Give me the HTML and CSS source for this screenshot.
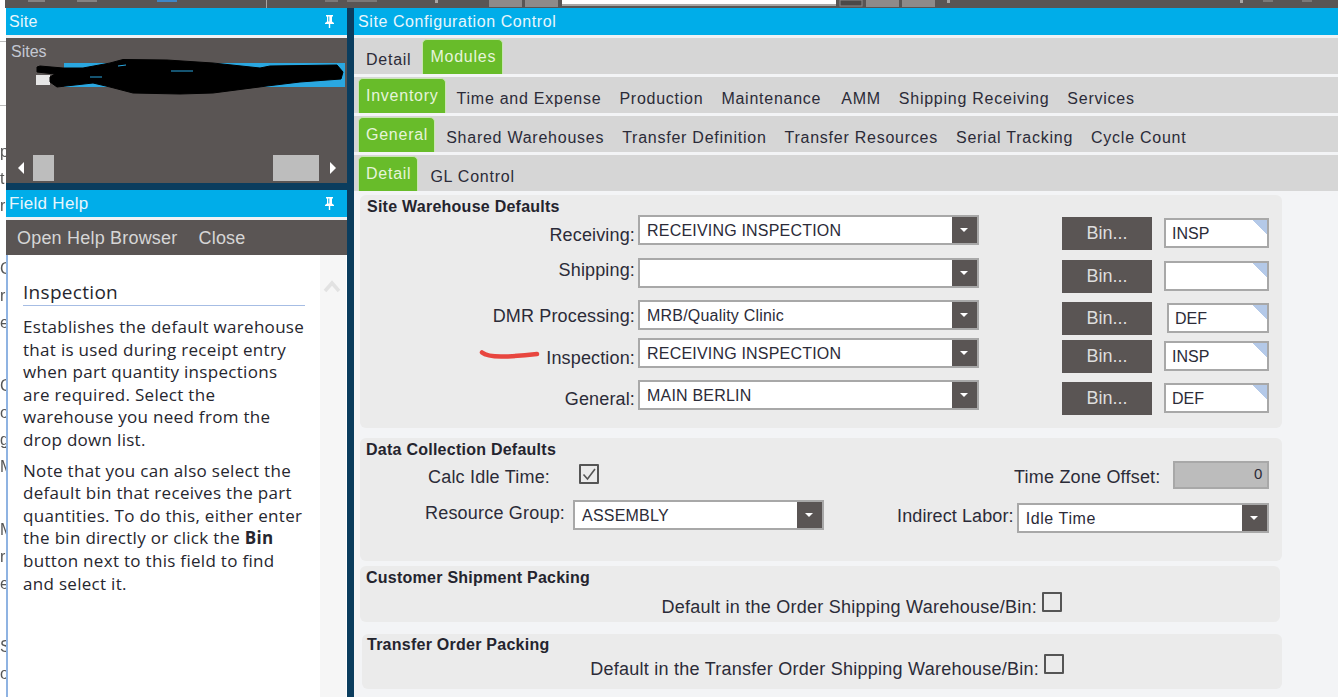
FILE: index.html
```html
<!DOCTYPE html>
<html>
<head>
  <meta charset="UTF-8">
  <title>Site Configuration Control</title>
  <link rel="stylesheet" href="styles.css">
</head>
<body>
  <div class="app">
    <!-- Toolbar is cut off by the top of the window, only its lower edge shows -->
    <svg class="toolbar" width="1333" height="8" viewBox="0 0 1333 8">
      <rect x="23" y="0" width="17" height="2" fill="#858281"/>
      <rect x="72" y="0" width="20" height="2" fill="#858281"/>
      <rect x="152" y="0" width="20" height="2" fill="#3f86c4"/>
      <rect x="261" y="0" width="1" height="8" fill="#a8a6a5"/>
      <rect x="320" y="0" width="13" height="2" fill="#7b7877"/>
      <rect x="342" y="0" width="30" height="2" fill="#7b7877"/>
      <rect x="430" y="0" width="3" height="3" fill="#a8a6a5"/>
      <rect x="484" y="0" width="33" height="7" fill="#8e8a89"/>
      <rect x="520" y="0" width="33" height="7" fill="#8e8a89"/>
      <rect x="557" y="0" width="274" height="4" fill="#ffffff"/>
      <rect x="557" y="4" width="274" height="2" fill="#a8a6a5"/>
      <rect x="835" y="0" width="22" height="6" fill="#4c4847" stroke="#8e8a89"/>
      <rect x="861" y="0" width="33" height="7" fill="#8e8a89"/>
      <rect x="897" y="0" width="33" height="7" fill="#8e8a89"/>
      <rect x="942" y="0" width="3" height="3" fill="#a8a6a5"/>
      <rect x="1235" y="0" width="3" height="3" fill="#a8a6a5"/>
      <rect x="1258" y="0" width="10" height="2" fill="#7b7877"/>
      <rect x="1297" y="0" width="10" height="2" fill="#7b7877"/>
    </svg>

    <div class="main">
      <!-- Sliver of the window behind -->
      <div class="behind">
        <div class="behind-rule"></div>
        <div class="behind-rule"></div>
        <div class="behind-letters">
          <div>p</div><div>t</div><div>r</div>
        </div>
        <div class="behind-letters">
          <div>C</div><div>r</div><div>e</div>
        </div>
        <div class="behind-letters">
          <div>C</div><div>o</div><div>g</div><div>M</div>
        </div>
        <div class="behind-letters">
          <div>M</div><div>r</div><div>e</div>
        </div>
        <div class="behind-letters">
          <div>S</div><div>o</div>
        </div>
      </div>

      <div class="left">
        <div class="panel-title">
          <span>Site</span>
          <svg class="pin" width="11" height="13" viewBox="0 0 11 13"><path d="M2 0h7v1.500H8v5l2 1.500v1H6.200v4H4.800V9H1V8l2-1.500v-5H2z M4.300 1.500v5h1v-5z" fill="#fff" fill-rule="evenodd"/></svg>
        </div>
        <div class="title-rule"></div>
        <div class="site-tree">
          <div class="tree-label">Sites</div>
          <div class="tree-row">
            <div class="tree-box"></div>
            <div class="tree-selected"></div>
          </div>
          <!-- Site name was scribbled out in the original capture -->
          <svg class="scribble" width="340" height="40" viewBox="0 0 340 40">
            <path d="M31 8L34 7L57 9L77 9L104 4L117 .5L161 1L207 4L254 9L264 7L331 6L337 13L335 20L294 23L261 27L207 34L174 35L127 34L104 28L87 24L51 28L44 23L44 18L49 15L31 13Z" fill="#000" stroke="#000" stroke-linejoin="round"/>
            <path d="M112 7l8-1M165 12h22M84 18h12" stroke="#2aa7e0" stroke-width="1"/>
          </svg>
          <div class="tree-scroll">
            <span class="arrow-left"></span>
            <span class="scroll-thumb scroll-thumb-small"></span>
            <span class="scroll-thumb scroll-thumb-large"></span>
            <span class="arrow-right"></span>
          </div>
        </div>

        <div class="panel-sep"></div>

        <div class="panel-title panel-title-help">
          <span>Field Help</span>
          <svg class="pin" width="11" height="13" viewBox="0 0 11 13"><path d="M2 0h7v1.500H8v5l2 1.500v1H6.200v4H4.800V9H1V8l2-1.500v-5H2z M4.300 1.500v5h1v-5z" fill="#fff" fill-rule="evenodd"/></svg>
        </div>
        <div class="title-rule"></div>
        <div class="help-actions">
          <span>Open Help Browser</span>
          <span>Close</span>
        </div>
        <div class="help-body">
          <div class="help-text">
            <h2>Inspection</h2>
            <p>Establishes the default warehouse that is used during receipt entry when part quantity inspections are required. Select the warehouse you need from the drop down list.</p>
            <p>Note that you can also select the default bin that receives the part quantities. To do this, either enter the bin directly or click the <b>Bin</b> button next to this field to find and select it.</p>
          </div>
          <div class="help-scroll">
            <svg width="18" height="13" viewBox="0 0 18 13"><path d="M2 11L9 3L16 11" fill="none" stroke="#e2e2e2" stroke-width="3.500"/></svg>
          </div>
        </div>
      </div>

      <div class="right">
        <div class="panel-title panel-title-config">Site Configuration Control</div>
        <div class="title-rule"></div>

        <div class="tab-row tab-row-top">
          <span class="tab">Detail</span>
          <span class="tab tab-active">Modules</span>
        </div>
        <div class="tab-row">
          <span class="tab tab-active">Inventory</span>
          <span class="tab">Time and Expense</span>
          <span class="tab">Production</span>
          <span class="tab">Maintenance</span>
          <span class="tab tab-amm">AMM</span>
          <span class="tab">Shipping Receiving</span>
          <span class="tab">Services</span>
        </div>
        <div class="tab-row">
          <span class="tab tab-active">General</span>
          <span class="tab">Shared Warehouses</span>
          <span class="tab">Transfer Definition</span>
          <span class="tab">Transfer Resources</span>
          <span class="tab">Serial Tracking</span>
          <span class="tab">Cycle Count</span>
        </div>
        <div class="tab-row tab-row-last">
          <span class="tab tab-active">Detail</span>
          <span class="tab">GL Control</span>
        </div>

        <div class="content">
          <section class="group group-warehouse">
            <h3>Site Warehouse Defaults</h3>
            <div class="wh-rows">
              <div class="wh-row">
                <label>Receiving:</label>
                <div class="combo combo-wh"><span>RECEIVING INSPECTION</span><i></i></div>
                <button>Bin...</button>
                <div class="bin-input">INSP</div>
              </div>
              <div class="wh-row">
                <label>Shipping:</label>
                <div class="combo combo-wh"><span></span><i></i></div>
                <button>Bin...</button>
                <div class="bin-input"></div>
              </div>
              <div class="wh-row">
                <label>DMR Processing:</label>
                <div class="combo combo-wh"><span>MRB/Quality Clinic</span><i></i></div>
                <button>Bin...</button>
                <div class="bin-input bin-input-narrow">DEF</div>
              </div>
              <div class="wh-row">
                <label class="marked">
                  <svg class="red-mark" width="62" height="10" viewBox="0 0 62 10"><path d="M3 2.500Q8 6.500 22 6.500T58 4" fill="none" stroke="#e8463f" stroke-width="4.500" stroke-linecap="round"/></svg>
                  Inspection:
                </label>
                <div class="combo combo-wh"><span>RECEIVING INSPECTION</span><i></i></div>
                <button>Bin...</button>
                <div class="bin-input">INSP</div>
              </div>
              <div class="wh-row">
                <label>General:</label>
                <div class="combo combo-wh"><span>MAIN BERLIN</span><i></i></div>
                <button>Bin...</button>
                <div class="bin-input">DEF</div>
              </div>
            </div>
          </section>

          <section class="group group-data">
            <h3>Data Collection Defaults</h3>
            <div class="data-row data-row-first">
              <label class="calc-label">Calc Idle Time:</label>
              <div class="check check-on">
                <svg width="19" height="19" viewBox="0 0 19 19"><path d="M3.500 9.500L7.500 14L15 4" fill="none" stroke="#555" stroke-width="1.600"/></svg>
              </div>
              <label class="zone-label">Time Zone Offset:</label>
              <div class="zone-input">0</div>
            </div>
            <div class="data-row data-row-second">
              <label class="resource-label">Resource Group:</label>
              <div class="combo combo-resource"><span>ASSEMBLY</span><i></i></div>
              <label class="labor-label">Indirect Labor:</label>
              <div class="combo combo-labor"><span>Idle Time</span><i></i></div>
            </div>
          </section>

          <section class="group group-shipment">
            <h3>Customer Shipment Packing</h3>
            <div class="check-row">
              <label>Default in the Order Shipping Warehouse/Bin:</label>
              <div class="check"></div>
            </div>
          </section>

          <section class="group group-transfer">
            <h3>Transfer Order Packing</h3>
            <div class="check-row">
              <label>Default in the Transfer Order Shipping Warehouse/Bin:</label>
              <div class="check"></div>
            </div>
          </section>
        </div>
      </div>
    </div>
  </div>
</body>
</html>
```

FILE: styles.css
```css
* {
  box-sizing: border-box;
}

html, body {
  margin: 0;
  height: 100%;
  overflow: hidden;
}

body {
  font-family: "Liberation Sans", Arial, sans-serif;
  color: #2b2b38;
  background-color: #fff;
}

.app {
  width: 1338px;
  height: 697px;
  overflow: hidden;
  filter: blur(0.4px);
}

.toolbar {
  display: block;
  margin-left: 5px;
  background-color: #595554;
}

.main {
  display: flex;
  height: 689px;
  background: linear-gradient(to right, #fff 6px, #0b3d5e 6px);
}

/* Window behind */
.behind {
  width: 6px;
  flex: none;
  overflow: hidden;
  background-color: #fff;
  color: #555;
  font-size: 16px;
  line-height: 27px;
  display: flex;
  flex-direction: column;
}

.behind-rule {
  height: 34px;
  border-bottom: 1px solid #bbb;
  flex: none;
}

.behind-rule + .behind-rule {
  height: 64px;
}

.behind-rule + .behind-rule + .behind-letters {
  margin-top: 32px;
}

.behind-letters {
  margin-bottom: 36px;
  flex: none;
}

/* Left column */
.left {
  width: 341px;
  flex: none;
  display: flex;
  flex-direction: column;
}

.panel-title {
  height: 27px;
  background-color: #00ade9;
  color: #e8f6fc;
  font-size: 16px;
  line-height: 27px;
  letter-spacing: 0.3px;
  padding: 0 12px 0 3px;
  display: flex;
  justify-content: space-between;
  align-items: center;
  flex: none;
}

.panel-title-help {
  font-size: 17px;
}

.panel-title-config {
  padding-left: 4px;
  letter-spacing: 0.58px;
}

.pin {
  display: block;
}

.title-rule {
  height: 3px;
  flex: none;
  background-color: #f0f2f4;
}

.site-tree {
  height: 145px;
  flex: none;
  position: relative;
  background-color: #5a5554;
  padding: 5px 5px 0;
}

.tree-label {
  color: #c4c8d2;
  font-size: 16px;
  line-height: 18px;
}

.tree-row {
  display: flex;
  align-items: flex-end;
  height: 24px;
  margin-top: 2px;
  padding-left: 25px;
}

.tree-box {
  width: 14px;
  height: 10px;
  flex: none;
  margin-bottom: 2px;
  background-color: #e6e6e6;
}

.tree-selected {
  width: 281px;
  height: 24px;
  flex: none;
  margin-left: 14px;
  background-color: #2aa7e0;
}

.scribble {
  position: absolute;
  left: 0;
  top: 21px;
}

.tree-scroll {
  position: absolute;
  left: 0;
  right: 0;
  bottom: 2px;
  height: 26px;
  display: flex;
  align-items: center;
}

.arrow-left,
.arrow-right {
  width: 0;
  height: 0;
  border-top: 6px solid transparent;
  border-bottom: 6px solid transparent;
}

.arrow-left {
  margin-left: 12px;
  border-right: 6px solid #fff;
}

.arrow-right {
  margin-left: 11px;
  border-left: 6px solid #fff;
}

.scroll-thumb {
  height: 26px;
  background-color: #bdbdbd;
}

.scroll-thumb-small {
  width: 21px;
  margin-left: 9px;
}

.scroll-thumb-large {
  width: 46px;
  margin-left: 219px;
}

.panel-sep {
  height: 7px;
  flex: none;
  background-color: #0b3d5e;
}

.help-actions {
  height: 35px;
  flex: none;
  background-color: #5a5554;
  color: #d6d6d6;
  font-size: 18px;
  line-height: 36px;
  letter-spacing: 0.2px;
  padding-left: 11px;
  display: flex;
  gap: 21px;
}

.help-body {
  flex: 1;
  display: flex;
  background-color: #fff;
  border-left: 2px solid #8fb3e2;
}

.help-text {
  width: 312px;
  padding: 24px 0 0 15px;
  font-family: "Open Sans", sans-serif;
  font-size: 17px;
  line-height: 22.6px;
  letter-spacing: 0.3px;
  color: #26262e;
}

.help-text h2 {
  margin: 0 0 10px;
  width: 282px;
  font-size: 19px;
  font-weight: 400;
  line-height: 26px;
  border-bottom: 1px solid #a6bde4;
}

.help-text p {
  width: 284px;
  margin: 0 0 8px;
}

.help-scroll {
  flex: 1;
  margin-right: 1px;
  padding: 24px 0 0 3px;
  background-color: #f6f6f6;
}

/* Right column */
.right {
  flex: 1;
  margin-left: 7px;
  background-color: #f3f4f6;
  display: flex;
  flex-direction: column;
}

.tab-row {
  height: 36px;
  flex: none;
  display: flex;
  align-items: flex-end;
  padding-left: 4px;
  margin-bottom: 3px;
  background-color: #d6d6d6;
  font-size: 16px;
  letter-spacing: 0.75px;
}

.tab-row-top {
  padding-left: 3px;
}

.tab-row-top .tab-active {
  margin-left: 2px;
}

.tab-row-last {
  margin-bottom: 0;
}

.tab-row-last .tab-active {
  margin-right: 3px;
}

.tab {
  height: 35px;
  line-height: 42px;
  padding: 0 9px;
  color: #2b2b38;
}

.tab-amm {
  margin-left: 2px;
}

.tab-active {
  background-color: #68bc2a;
  border: 1px solid #c8e6b2;
  border-bottom: none;
  border-radius: 5px 5px 0 0;
  color: #e6f4da;
  line-height: 34px;
  padding: 0 6px 0 7px;
  margin-right: 2px;
}

.content {
  flex: 1;
  padding: 4px 56px 0 6px;
}

.group {
  background-color: #ebebeb;
  border-radius: 6px;
  padding: 3px 6px;
}

.group h3 {
  margin: 0 0 -2px;
  font-size: 16px;
  line-height: 18px;
  letter-spacing: 0.25px;
  color: #24242e;
}

.group-warehouse {
  height: 233px;
  margin-bottom: 10px;
}

.group-warehouse h3 {
  margin-left: 1px;
}

.group-data {
  height: 123px;
  margin-bottom: 5px;
}

.group-shipment {
  height: 56px;
  margin-bottom: 12px;
  margin-right: 2px;
}

.group-transfer {
  height: 55px;
  margin-left: 2px;
  padding: 2px 5px;
}

.wh-rows {
  display: grid;
  grid-template-rows: 43px 42px 38px 42px 36px;
  margin-top: 1px;
}

.wh-row {
  display: flex;
  align-items: flex-start;
}

.wh-row label {
  width: 269px;
  margin-right: 3px;
  text-align: right;
  font-size: 18px;
  line-height: 36px;
  letter-spacing: 0.15px;
}

/* Labels do not sit level with their fields in this dialog */
.wh-row:nth-child(1) label {
  margin-top: 2px;
}

.wh-row:nth-child(2) label {
  margin-top: -6px;
}

.wh-row:nth-child(3) label {
  margin-top: -2px;
}

.wh-row:nth-child(4) label {
  margin-top: 2px;
}

.wh-row:nth-child(5) label {
  margin-top: 1px;
}

.marked {
  position: relative;
}

.red-mark {
  position: absolute;
  left: 113px;
  top: 10px;
}

.combo {
  height: 30px;
  display: flex;
  background-color: #fff;
  border: 2px solid #a8a8a8;
  font-size: 16px;
  line-height: 28px;
  letter-spacing: 0.2px;
}

.combo span {
  flex: 1;
  padding-left: 7px;
}

.combo i {
  width: 25px;
  background-color: #5a5554;
  position: relative;
}

.combo i::after {
  content: "";
  position: absolute;
  left: 8px;
  top: 11px;
  border-left: 4px solid transparent;
  border-right: 4px solid transparent;
  border-top: 4px solid #fff;
}

.combo-wh {
  width: 341px;
  margin-right: 83px;
}

.wh-row button {
  width: 90px;
  height: 33px;
  margin: 2px 12px 0 0;
  padding: 0;
  border: none;
  background-color: #5a5554;
  color: #dedede;
  font-family: inherit;
  font-size: 18px;
}

.bin-input {
  width: 105px;
  height: 30px;
  margin-top: 3px;
  padding-left: 6px;
  background: linear-gradient(225deg, #b4c9e8 10px, #fff 10px);
  border: 2px solid #a8a8a8;
  font-size: 16px;
  line-height: 27px;
}

.bin-input-narrow {
  width: 102px;
  margin-left: 3px;
}

.data-row {
  display: flex;
  font-size: 18px;
  letter-spacing: 0.2px;
}

.data-row-first {
  height: 39px;
  margin-top: 4px;
  align-items: flex-start;
}

.calc-label {
  margin-left: 62px;
  line-height: 32px;
}

.check {
  width: 20px;
  height: 20px;
  flex: none;
  border: 2px solid #555;
  border-radius: 1px;
}

.check svg {
  display: block;
  margin: -1px;
}

.check-on {
  margin-left: 29px;
  margin-top: 3px;
}

.zone-label {
  margin-left: 415px;
  line-height: 32px;
}

.zone-input {
  width: 96px;
  height: 28px;
  margin-left: 12px;
  padding-right: 4px;
  text-align: right;
  background-color: #bcbcbc;
  border: 2px solid #a8a8a8;
  font-size: 15px;
  line-height: 22px;
}

.data-row-second {
  align-items: flex-start;
}

.resource-label {
  margin-left: 59px;
  line-height: 26px;
}

.combo-resource {
  width: 251px;
  margin: 0 0 0 8px;
}

.labor-label {
  margin-left: 73px;
  line-height: 26px;
  margin-top: 3px;
  letter-spacing: 0.1px;
}

.combo-labor {
  width: 252px;
  margin: 3px 0 0 3px;
  letter-spacing: 0.6px;
}

.check-row {
  display: flex;
  justify-content: flex-end;
  align-items: flex-start;
  font-size: 18px;
  line-height: 30px;
  letter-spacing: 0.25px;
}

.group-shipment .check-row {
  padding-right: 212px;
  margin-top: 7px;
}

.group-transfer .check-row {
  padding-right: 213px;
  margin-top: 2px;
}

.check-row .check {
  margin: 0 0 0 5px;
}
```
